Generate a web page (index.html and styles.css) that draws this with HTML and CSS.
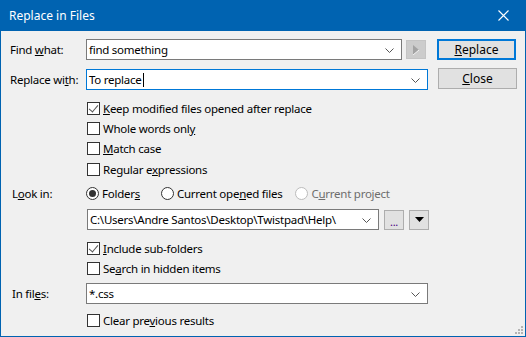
FILE: index.html
```html
<!DOCTYPE html>
<html lang="en">
<head>
    <meta charset="UTF-8">
    <title>Replace in Files</title>
    <link rel="stylesheet" href="styles.css">
</head>
<body>
    <div class="window">
        <div class="titlebar">
            <span class="title">Replace in Files</span>
            <svg class="close-x" width="11" height="11" viewBox="0 0 11 11">
                <path d="M0.5 0.5 L10.5 10.5 M10.5 0.5 L0.5 10.5" stroke="#fff" stroke-width="1.1"/>
            </svg>
        </div>

        <div class="content">
            <div class="row row-find">
                <label class="label">Find <u>w</u>hat:</label>
                <div class="combo combo-find">
                    <span class="combo-text">find something</span>
                    <svg class="chevron" width="9" height="5" viewBox="0 0 9 5"><path d="M0.5 0.5 L4.5 4.5 L8.5 0.5" fill="none" stroke="#555" stroke-width="1"/></svg>
                </div>
                <div class="arrow-btn">
                    <svg width="8" height="10" viewBox="0 0 8 10"><path d="M1 0 L7 5 L1 10 Z" fill="#a3a3a3"/><path d="M7 5 L1 10" stroke="#f4f4f4" stroke-width="1"/></svg>
                </div>
                <button class="btn btn-default"><u>R</u>eplace</button>
            </div>

            <div class="row row-replace">
                <label class="label">Replace wi<u>t</u>h:</label>
                <div class="combo combo-wide combo-focus">
                    <span class="combo-text">To replace<span class="caret"></span></span>
                    <svg class="chevron" width="9" height="5" viewBox="0 0 9 5"><path d="M0.5 0.5 L4.5 4.5 L8.5 0.5" fill="none" stroke="#555" stroke-width="1"/></svg>
                </div>
                <button class="btn btn-close"><u>C</u>lose</button>
            </div>

            <div class="options">
                <div class="check checked"><span class="box"></span><span><u>K</u>eep modified files opened after replace</span></div>
                <div class="check"><span class="box"></span><span>Whole words onl<u>y</u></span></div>
                <div class="check"><span class="box"></span><span><u>M</u>atch case</span></div>
                <div class="check check-last"><span class="box"></span><span>Regular e<u>x</u>pressions</span></div>
            </div>

            <div class="row row-look">
                <label class="label label-indent">L<u>o</u>ok in:</label>
                <div class="radio selected"><span class="dot"></span><span>Folder<u>s</u></span></div>
                <div class="radio"><span class="dot"></span><span>Current ope<u>n</u>ed files</span></div>
                <div class="radio disabled"><span class="dot"></span><span>C<u>u</u>rrent project</span></div>
            </div>

            <div class="row row-path">
                <div class="combo combo-path">
                    <span class="combo-text">C:\Users\Andre Santos\Desktop\Twistpad\Help\</span>
                    <svg class="chevron" width="9" height="5" viewBox="0 0 9 5"><path d="M0.5 0.5 L4.5 4.5 L8.5 0.5" fill="none" stroke="#555" stroke-width="1"/></svg>
                </div>
                <div class="small-btn dots">...</div>
                <div class="small-btn">
                    <svg width="9" height="5" viewBox="0 0 9 5"><path d="M0 0 L9 0 L4.5 5 Z" fill="#000"/></svg>
                </div>
            </div>

            <div class="options options-folders">
                <div class="check checked"><span class="box"></span><span><u>I</u>nclude sub-folders</span></div>
                <div class="check"><span class="box"></span><span>Se<u>a</u>rch in hidden items</span></div>
            </div>

            <div class="row row-files">
                <label class="label label-indent">In fil<u>e</u>s:</label>
                <div class="combo combo-wide">
                    <span class="combo-text">*.css</span>
                    <svg class="chevron" width="9" height="5" viewBox="0 0 9 5"><path d="M0.5 0.5 L4.5 4.5 L8.5 0.5" fill="none" stroke="#555" stroke-width="1"/></svg>
                </div>
            </div>

            <div class="options options-clear">
                <div class="check"><span class="box"></span><span>Clear pre<u>v</u>ious results</span></div>
            </div>
        </div>

        <div class="grip">
            <span style="left:6px;top:0"></span>
            <span style="left:3px;top:3px"></span><span style="left:6px;top:3px"></span>
            <span style="left:0;top:6px"></span><span style="left:3px;top:6px"></span><span style="left:6px;top:6px"></span>
        </div>
    </div>
</body>
</html>
```

FILE: styles.css
```css
* {
    margin: 0;
    padding: 0;
    box-sizing: border-box;
}

body {
    width: 526px;
    height: 337px;
    overflow: hidden;
    font-family: 'Noto Sans', sans-serif;
    font-size: 11.5px;
    letter-spacing: -0.25px;
    color: #000;
    background-color: #f0f0f0;
}

.window {
    position: relative;
    width: 526px;
    height: 337px;
    border: 1px solid #0063b1;
    border-top: none;
    background-color: #f0f0f0;
}

.titlebar {
    height: 31px;
    margin: 0 -1px;
    background-color: #0063b1;
    display: flex;
    align-items: center;
    justify-content: space-between;
    padding: 0 17px 0 9px;
    color: #fff;
}

.title {
    font-size: 12px;
    letter-spacing: 0;
}

.content {
    padding: 8px 0 0 8px;
}

.row {
    display: flex;
    align-items: center;
}

.label {
    width: 77px;
    white-space: nowrap;
    padding-left: 1px;
}

.label-indent {
    padding-left: 3px;
}

.combo {
    position: relative;
    height: 21px;
    background-color: #fff;
    border: 1px solid #7a7a7a;
    display: flex;
    align-items: center;
    padding-left: 2px;
}

.combo-find {
    width: 316px;
}

.combo-wide {
    width: 342px;
}

.combo-focus {
    border-color: #0078d7;
}

.combo-path {
    width: 292px;
}

.combo-text {
    white-space: nowrap;
}

.caret {
    display: inline-block;
    width: 1px;
    height: 14px;
    margin-left: 1px;
    background-color: #000;
    vertical-align: -3px;
}

.chevron {
    position: absolute;
    right: 7px;
    top: 8px;
}

.arrow-btn {
    width: 20px;
    height: 19px;
    margin-left: 4px;
    background-color: #cccccc;
    border: 1px solid #c4c4c4;
    display: flex;
    align-items: center;
    justify-content: center;
}

.btn {
    width: 79px;
    height: 21px;
    margin-left: 10px;
    font-family: inherit;
    font-size: 12px;
    letter-spacing: 0;
    background-color: #e1e1e1;
    border: 1px solid #adadad;
    color: #000;
}

.row-find .btn {
    margin-left: 11px;
}

.btn-default {
    border: 2px solid #0078d7;
}

.row-replace {
    margin-top: 9px;
}

.row-replace .btn {
    margin-top: -2px;
}

.options {
    margin: 8px 0 0 78px;
}

.check, .radio {
    display: flex;
    align-items: center;
    height: 20px;
    white-space: nowrap;
}

.check .box {
    position: relative;
    width: 13px;
    height: 13px;
    border: 1px solid #333;
    background-color: #fff;
    margin-right: 3px;
}

.check.checked .box::after {
    content: "";
    position: absolute;
    left: 3px;
    top: 0;
    width: 4px;
    height: 8px;
    border: solid #555;
    border-width: 0 1px 1px 0;
    transform: rotate(40deg);
}

.check-last {
    margin-top: 1px;
}

.row-look {
    margin-top: 4px;
    height: 20px;
}

.radio {
    margin-right: 13px;
}

.radio .dot {
    position: relative;
    width: 13px;
    height: 13px;
    border: 1px solid #333;
    border-radius: 50%;
    background-color: #fff;
    margin-right: 3px;
}

.radio.selected .dot::after {
    content: "";
    position: absolute;
    left: 2px;
    top: 2px;
    width: 7px;
    height: 7px;
    border-radius: 50%;
    background-color: #333;
}

.radio.selected {
    margin-right: 21px;
}

.radio.disabled {
    color: #6d6d6d;
}

.radio.disabled .dot {
    border-color: #bcbcbc;
}

.row-path {
    margin: 6px 0 0 78px;
}

.small-btn {
    width: 20px;
    height: 20px;
    margin-left: 5px;
    background-color: #e1e1e1;
    border: 1px solid #adadad;
    display: flex;
    align-items: center;
    justify-content: center;
}

.small-btn.dots {
    font-size: 11px;
    line-height: 1;
    padding-bottom: 2px;
    align-items: flex-end;
    color: #4b0082;
}

.options-folders {
    margin-top: 8px;
}

.row-files {
    margin-top: 5px;
}

.options-clear {
    margin-top: 6px;
}

.grip {
    position: absolute;
    right: 2px;
    bottom: 2px;
    width: 8px;
    height: 8px;
}

.grip span {
    position: absolute;
    width: 2px;
    height: 2px;
    background-color: #b4b4b4;
}
```
